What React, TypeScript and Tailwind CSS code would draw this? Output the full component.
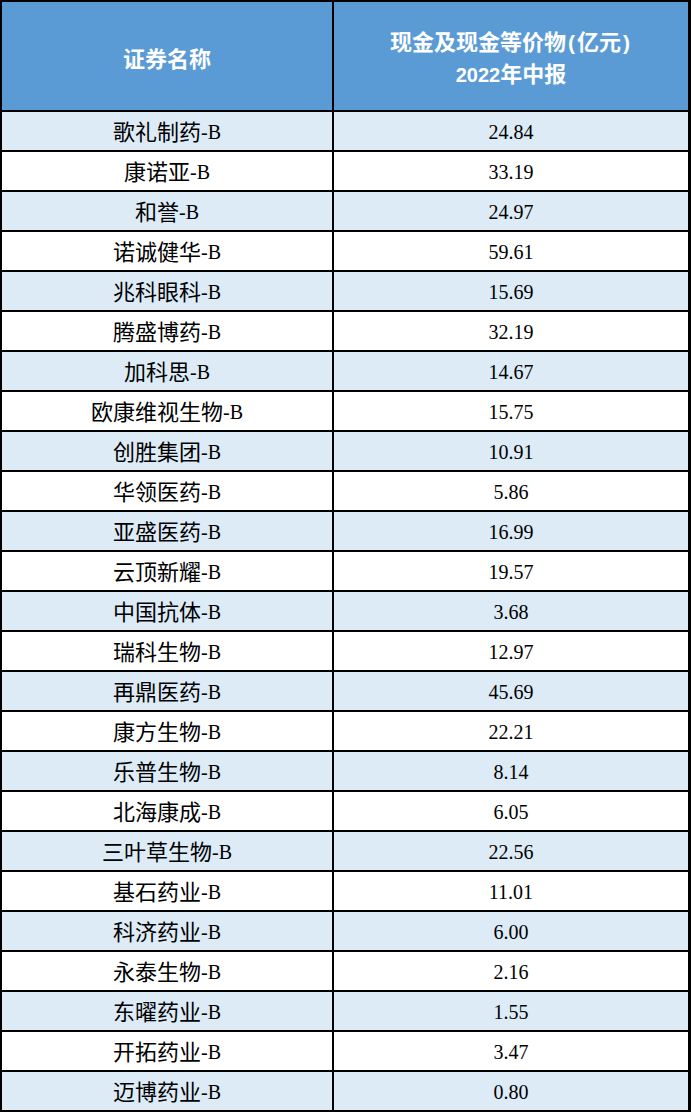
import React from "react";

const rows: [string, string][] = [
  ["歌礼制药", "24.84"],
  ["康诺亚", "33.19"],
  ["和誉", "24.97"],
  ["诺诚健华", "59.61"],
  ["兆科眼科", "15.69"],
  ["腾盛博药", "32.19"],
  ["加科思", "14.67"],
  ["欧康维视生物", "15.75"],
  ["创胜集团", "10.91"],
  ["华领医药", "5.86"],
  ["亚盛医药", "16.99"],
  ["云顶新耀", "19.57"],
  ["中国抗体", "3.68"],
  ["瑞科生物", "12.97"],
  ["再鼎医药", "45.69"],
  ["康方生物", "22.21"],
  ["乐普生物", "8.14"],
  ["北海康成", "6.05"],
  ["三叶草生物", "22.56"],
  ["基石药业", "11.01"],
  ["科济药业", "6.00"],
  ["永泰生物", "2.16"],
  ["东曜药业", "1.55"],
  ["开拓药业", "3.47"],
  ["迈博药业", "0.80"],
];

const serif = "font-['Liberation_Serif','Noto_Sans_CJK_SC',serif]";
const sans = "font-['Liberation_Sans','Noto_Sans_CJK_SC',sans-serif]";

const App = () => {
  return (
    <div className="w-[691px] h-[1112px] bg-white">
      <div className="border-t-2 border-l-2 border-r-[3px] border-black">
        <div className="grid grid-cols-[332px_1fr] h-[110px] bg-[#5b9bd5] border-b-2 border-black text-white font-bold">
          <div className={`flex items-center justify-center pt-[6px] border-r-2 border-black text-[22px] ${sans}`}>
            证券名称
          </div>
          <div className={`flex flex-col items-center justify-center pt-[6px] leading-[32px] ${sans}`}>
            <span className="text-[22px]">
              现金及现金等价物<span className="text-[21px] px-[2px]">(</span>亿元<span className="text-[21px] px-[2px]">)</span>
            </span>
            <span className="text-[22px]">
              <span className="text-[20px]">2022</span>年中报
            </span>
          </div>
        </div>
        {rows.map(([name, value], i) => (
          <div
            key={name}
            className={`grid grid-cols-[332px_1fr] h-[40px] border-b-2 border-black text-black ${serif} ${
              i % 2 === 0 ? "bg-[#ddebf7]" : "bg-white"
            }`}
          >
            <div className="flex items-center justify-center pt-[2px] border-r-2 border-black">
              <span className="text-[22px]">{name}</span>
              <span className="text-[20px]">-B</span>
            </div>
            <div className="flex items-center justify-center pt-[2px] text-[20px]">{value}</div>
          </div>
        ))}
      </div>
    </div>
  );
};

export default App;
